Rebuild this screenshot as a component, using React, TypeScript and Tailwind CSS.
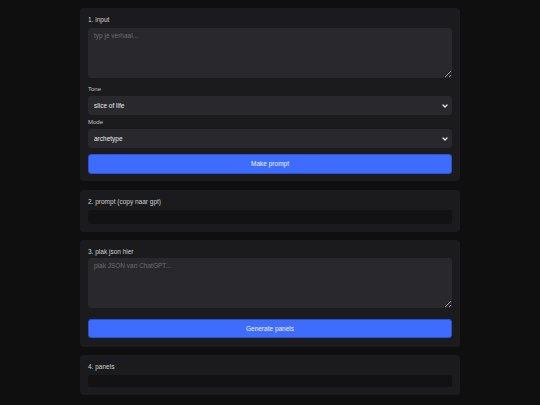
function Chevron() {
  return (
    <svg
      className="pointer-events-none absolute right-[4px] top-1/2 h-[5px] w-[6px] -translate-y-1/2"
      viewBox="0 0 12 10"
      fill="none"
    >
      <path d="M2 3l4 4 4-4" stroke="#e8e8ec" strokeWidth="2.6" strokeLinecap="round" strokeLinejoin="round" />
    </svg>
  );
}

function Select({ options }: { options: string[] }) {
  return (
    <div className="relative mt-[3px] h-[19px]">
      <select className="block h-[19px] w-full appearance-none rounded-[3px] bg-[#29292d] px-[6px] text-[6.5px] leading-[19px] text-[#ececef] focus:outline-none">
        {options.map((o) => (
          <option key={o}>{o}</option>
        ))}
      </select>
      <Chevron />
    </div>
  );
}

export default function App() {
  const font = { fontFamily: '"Liberation Sans", Arial, sans-serif' };
  return (
    <div
      className="min-h-[405px] w-full bg-[#0f0f10] pt-[8px] pb-[10px] text-[#e4e4e7] [color-scheme:dark]"
      style={font}
    >
      <main className="mx-auto flex w-[380px] flex-col">
        <section className="flex flex-col rounded-[4px] bg-[#1b1b1d] p-[8px] pb-[7px]">
          <label className="h-[8px] text-[6.5px] leading-[8px] text-[#cfcfd3]">1. input</label>
          <textarea
            className="mt-[4px] block h-[50px] w-full rounded-[3px] bg-[#29292d] px-[6px] py-[4px] text-[6.5px] leading-[8px] text-[#e4e4e7] placeholder:text-[#6c6c72] focus:outline-none"
            placeholder="typ je verhaal..."
          />
          <label className="mt-[7px] h-[8px] text-[6px] leading-[8px] text-[#c4c4c9]">Tone</label>
          <Select options={["slice of life", "drama", "comedy"]} />
          <label className="mt-[3px] h-[8px] text-[6px] leading-[8px] text-[#c4c4c9]">Mode</label>
          <Select options={["archetype", "freeform"]} />
          <button className="mt-[6px] h-[20px] w-full rounded-[3px] border-[0.5px] border-[#2c52c9] bg-[#3d6cff] text-[6.5px] text-[#f2f4ff]">
            Make prompt
          </button>
        </section>

        <section className="mt-[9px] flex flex-col rounded-[4px] bg-[#1b1b1d] p-[8px]">
          <label className="h-[8px] text-[6.5px] leading-[8px] text-[#cfcfd3]">2. prompt (copy naar gpt)</label>
          <pre className="mt-[4px] h-[14px] w-full rounded-[3px] bg-[#121214]"></pre>
        </section>

        <section className="mt-[8px] flex flex-col rounded-[4px] bg-[#1b1b1d] p-[8px] pb-[9px]">
          <label className="h-[8px] text-[6.5px] leading-[8px] text-[#cfcfd3]">3. plak json hier</label>
          <textarea
            className="mt-[2px] block h-[50px] w-full rounded-[3px] bg-[#29292d] px-[6px] py-[4px] text-[6.5px] leading-[8px] text-[#e4e4e7] placeholder:text-[#6c6c72] focus:outline-none"
            placeholder="plak JSON van ChatGPT..."
          />
          <button className="mt-[11px] h-[19px] w-full rounded-[3px] border-[0.5px] border-[#2c52c9] bg-[#3d6cff] text-[6.5px] text-[#f2f4ff]">
            Generate panels
          </button>
        </section>

        <section className="mt-[8px] flex flex-col rounded-[4px] bg-[#1b1b1d] p-[8px]">
          <label className="h-[8px] text-[6.5px] leading-[8px] text-[#cfcfd3]">4. panels</label>
          <div className="mt-[4px] h-[12px] w-full rounded-[3px] bg-[#121214]"></div>
        </section>
      </main>
    </div>
  );
}
